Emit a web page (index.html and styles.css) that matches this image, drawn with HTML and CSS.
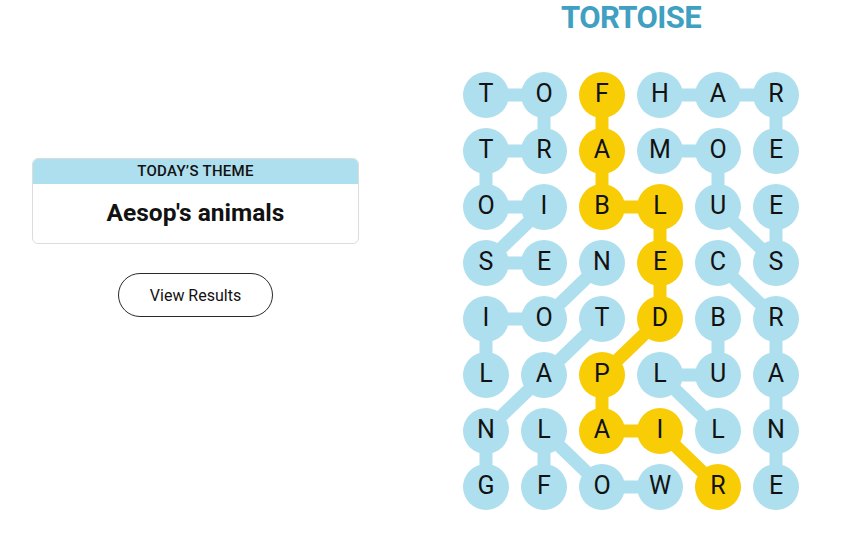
FILE: index.html
```html
<!DOCTYPE html>
<html lang="en">
<head>
<meta charset="utf-8">
<title>Strands</title>
<link rel="stylesheet" href="styles.css">
</head>
<body>
<div class="page">
  <section class="left">
    <div class="theme-card">
      <div class="theme-head">TODAY’S THEME</div>
      <div class="theme-body">Aesop's animals</div>
    </div>
    <button class="results-btn" type="button">View Results</button>
  </section>
  <section class="right">
    <h1 class="word-title">TORTOISE</h1>
    <div class="board">
      <svg class="links" width="336" height="438" viewBox="0 0 336 438" aria-hidden="true">
        <g fill="none" stroke="#aedfee" stroke-width="13" stroke-linejoin="round" stroke-linecap="round">
          <polyline points="23,23 81,23 81,79 23,79 23,135 81,135 23,191 81,191"/>
          <polyline points="197,23 255,23 313,23 313,79"/>
          <polyline points="197,79 255,79 255,135 313,191 313,135"/>
          <polyline points="255,191 313,247 313,303 313,359 313,415"/>
          <polyline points="23,303 23,247 81,247 139,191"/>
          <polyline points="23,415 23,359 81,303 139,247"/>
          <polyline points="197,415 139,415 81,359 81,415"/>
          <polyline points="255,247 255,303 197,303 255,359"/>
        </g>
        <polyline fill="none" stroke="#f8cd05" stroke-width="13" stroke-linejoin="round" stroke-linecap="round" points="139,23 139,79 139,135 197,135 197,191 197,247 139,303 139,359 197,359 255,415"/>
      </svg>
      <div class="grid">
        <span class="cell">T</span><span class="cell">O</span><span class="cell gold">F</span><span class="cell">H</span><span class="cell">A</span><span class="cell">R</span>
        <span class="cell">T</span><span class="cell">R</span><span class="cell gold">A</span><span class="cell">M</span><span class="cell">O</span><span class="cell">E</span>
        <span class="cell">O</span><span class="cell">I</span><span class="cell gold">B</span><span class="cell gold">L</span><span class="cell">U</span><span class="cell">E</span>
        <span class="cell">S</span><span class="cell">E</span><span class="cell">N</span><span class="cell gold">E</span><span class="cell">C</span><span class="cell">S</span>
        <span class="cell">I</span><span class="cell">O</span><span class="cell">T</span><span class="cell gold">D</span><span class="cell">B</span><span class="cell">R</span>
        <span class="cell">L</span><span class="cell">A</span><span class="cell gold">P</span><span class="cell">L</span><span class="cell">U</span><span class="cell">A</span>
        <span class="cell">N</span><span class="cell">L</span><span class="cell gold">A</span><span class="cell gold">I</span><span class="cell">L</span><span class="cell">N</span>
        <span class="cell">G</span><span class="cell">F</span><span class="cell">O</span><span class="cell">W</span><span class="cell gold">R</span><span class="cell">E</span>
      </div>
    </div>
  </section>
</div>
</body>
</html>
```

FILE: styles.css
```css
* { box-sizing: border-box; }

html, body {
  margin: 0;
  padding: 0;
  background: #ffffff;
  color: #121212;
  font-family: Roboto, "Liberation Sans", Arial, sans-serif;
}

.page {
  display: flex;
  width: 858px;
  height: 533px;
}

.left {
  width: 391px;
  padding: 158px 32px 0;
  display: flex;
  flex-direction: column;
  align-items: center;
}

.theme-card {
  width: 100%;
  border: 1px solid #dcdcdc;
  border-radius: 6px;
  overflow: hidden;
}

.theme-head {
  height: 25px;
  background: #aedfee;
  text-align: center;
  font-size: 15px;
  font-weight: 500;
  line-height: 25px;
  letter-spacing: 0.3px;
  color: #121212;
}

.theme-body {
  height: 59px;
  display: flex;
  align-items: center;
  justify-content: center;
  font-size: 24.5px;
  font-weight: 700;
  padding-bottom: 2px;
}

.results-btn {
  margin-top: 29px;
  width: 155px;
  height: 44px;
  border: 1px solid #2a2a2a;
  border-radius: 22px;
  background: #ffffff;
  color: #121212;
  font-family: Roboto, "Liberation Sans", Arial, sans-serif;
  font-size: 16px;
  padding: 0;
}

.right {
  padding-left: 72px;
  display: flex;
  flex-direction: column;
}

.word-title {
  width: 336px;
  margin: 0;
  text-align: center;
  font-size: 31px;
  line-height: 36px;
  font-weight: 700;
  letter-spacing: -0.6px;
  color: #3fa0c2;
}

.board {
  position: relative;
  margin-top: 36px;
  width: 336px;
  height: 438px;
}

.links {
  position: absolute;
  left: 0;
  top: 0;
}

.grid {
  position: relative;
  display: grid;
  grid-template-columns: repeat(6, 46px);
  grid-auto-rows: 46px;
  column-gap: 12px;
  row-gap: 10px;
}

.cell {
  width: 46px;
  height: 46px;
  border-radius: 50%;
  background: #aedfee;
  display: flex;
  align-items: center;
  justify-content: center;
  font-size: 25px;
  font-weight: 400;
  color: #121212;
  padding-bottom: 4px;
}

.cell.gold {
  background: #f8cd05;
}
```
